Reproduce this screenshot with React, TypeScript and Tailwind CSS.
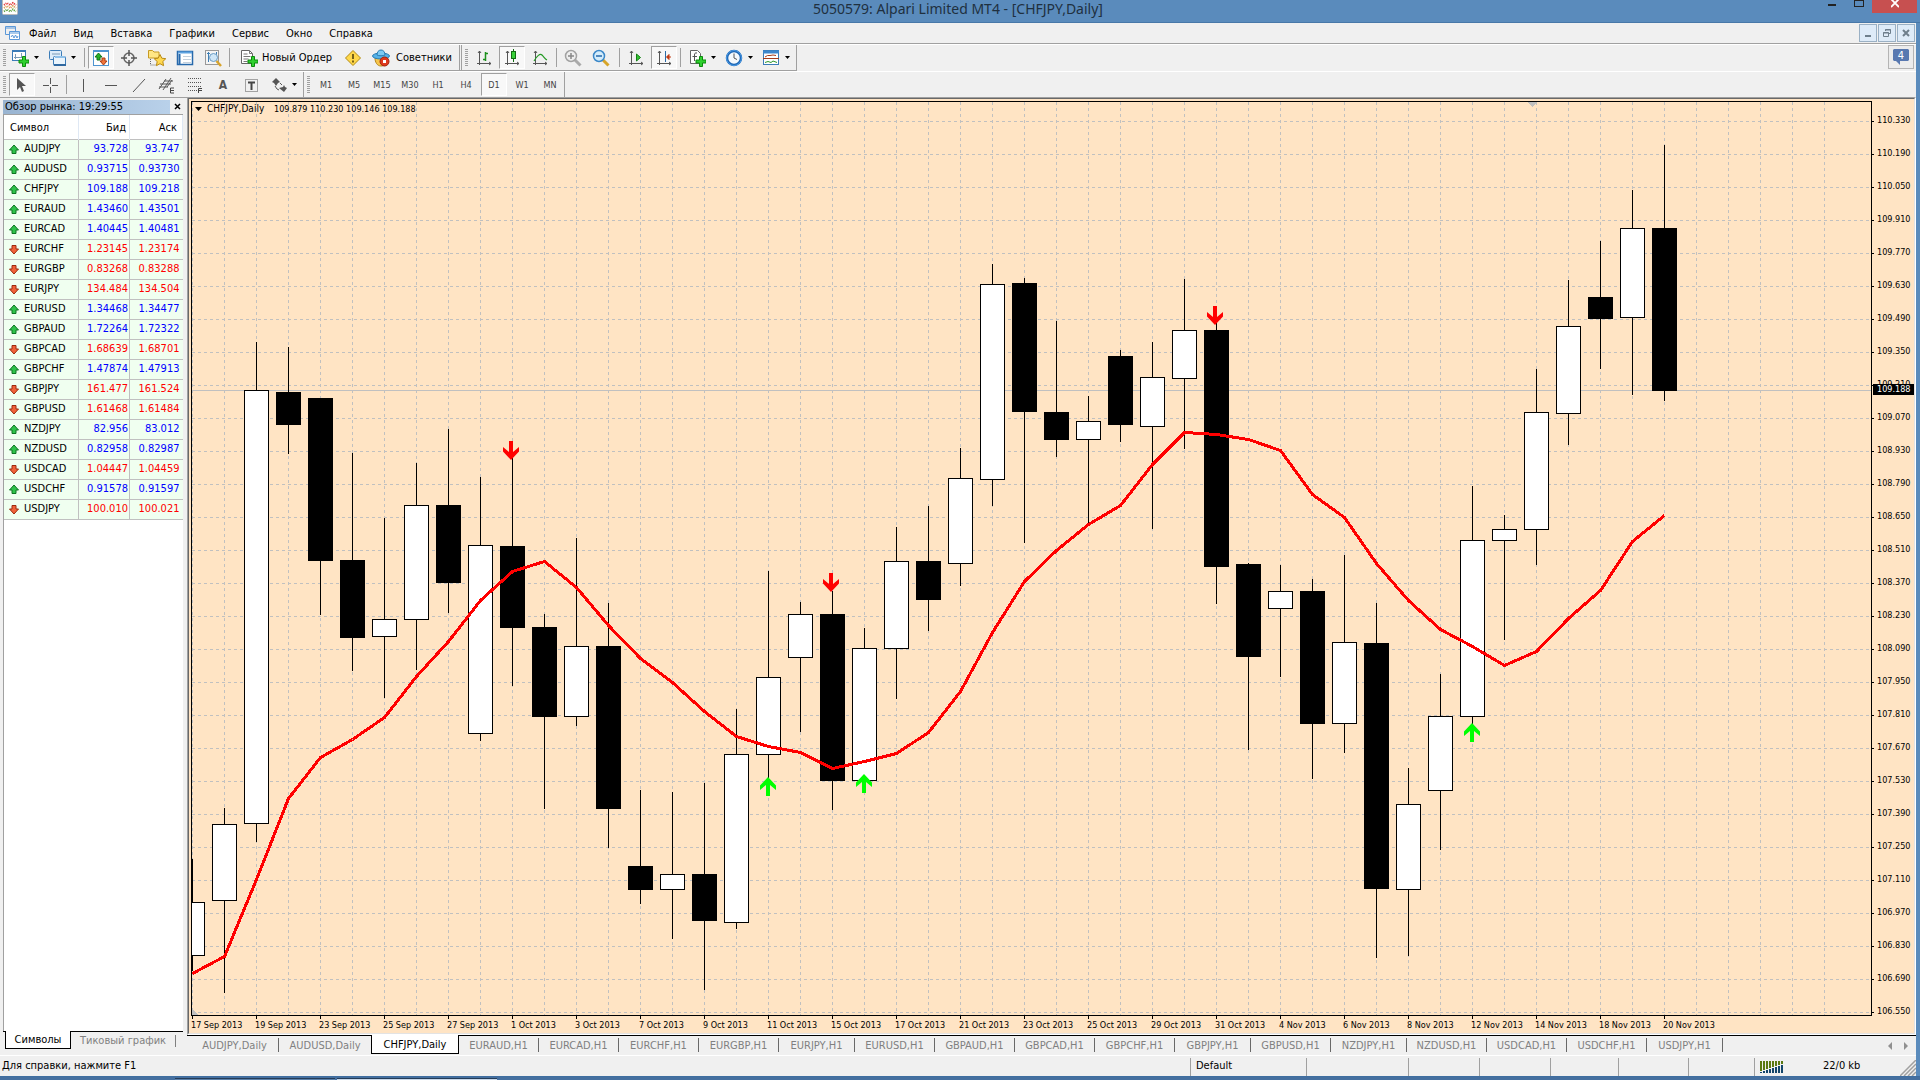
import React from "react";
import clsx from "clsx";

const TOP = 101;
const STEP = 32;

const menu = ["Файл", "Вид", "Вставка", "Графики", "Сервис", "Окно", "Справка"];

const quotes: [string, string, string, boolean][] = [
  ["AUDJPY", "93.728", "93.747", true],
  ["AUDUSD", "0.93715", "0.93730", true],
  ["CHFJPY", "109.188", "109.218", true],
  ["EURAUD", "1.43460", "1.43501", true],
  ["EURCAD", "1.40445", "1.40481", true],
  ["EURCHF", "1.23145", "1.23174", false],
  ["EURGBP", "0.83268", "0.83288", false],
  ["EURJPY", "134.484", "134.504", false],
  ["EURUSD", "1.34468", "1.34477", true],
  ["GBPAUD", "1.72264", "1.72322", true],
  ["GBPCAD", "1.68639", "1.68701", false],
  ["GBPCHF", "1.47874", "1.47913", true],
  ["GBPJPY", "161.477", "161.524", false],
  ["GBPUSD", "1.61468", "1.61484", false],
  ["NZDJPY", "82.956", "83.012", true],
  ["NZDUSD", "0.82958", "0.82987", true],
  ["USDCAD", "1.04447", "1.04459", false],
  ["USDCHF", "0.91578", "0.91597", true],
  ["USDJPY", "100.010", "100.021", false],
];

const periods = ["M1", "M5", "M15", "M30", "H1", "H4", "D1", "W1", "MN"];

const charts = [
  "AUDJPY,Daily", "AUDUSD,Daily", "CHFJPY,Daily", "EURAUD,H1", "EURCAD,H1", "EURCHF,H1", "EURGBP,H1",
  "EURJPY,H1", "EURUSD,H1", "GBPAUD,H1", "GBPCAD,H1", "GBPCHF,H1", "GBPJPY,H1", "GBPUSD,H1",
  "NZDJPY,H1", "NZDUSD,H1", "USDCAD,H1", "USDCHF,H1", "USDJPY,H1",
];

const dates = [
  "17 Sep 2013", "19 Sep 2013", "23 Sep 2013", "25 Sep 2013", "27 Sep 2013", "1 Oct 2013", "3 Oct 2013",
  "7 Oct 2013", "9 Oct 2013", "11 Oct 2013", "15 Oct 2013", "17 Oct 2013", "21 Oct 2013", "23 Oct 2013",
  "25 Oct 2013", "29 Oct 2013", "31 Oct 2013", "4 Nov 2013", "6 Nov 2013", "8 Nov 2013", "12 Nov 2013",
  "14 Nov 2013", "18 Nov 2013", "20 Nov 2013",
];

// high, body top, body bottom, low, 1 = bull
const candles: [number, number, number, number, number][] = [
  [859, 902, 955, 971, 1], [808, 824, 900, 993, 1], [342, 390, 823, 842, 1], [347, 392, 424, 454, 0],
  [398, 398, 560, 615, 0], [453, 560, 637, 671, 0], [518, 619, 636, 698, 1], [463, 505, 619, 670, 1],
  [429, 505, 582, 613, 0], [477, 545, 733, 741, 1], [458, 546, 627, 686, 0], [614, 627, 716, 809, 0],
  [538, 646, 716, 726, 1], [603, 646, 808, 848, 0], [790, 866, 889, 904, 0], [792, 874, 889, 939, 1],
  [783, 874, 920, 990, 0], [709, 754, 922, 929, 1], [571, 677, 754, 778, 1], [602, 614, 657, 732, 1],
  [591, 614, 780, 810, 0], [628, 648, 780, 781, 1], [527, 561, 648, 699, 1], [506, 561, 599, 631, 0],
  [448, 478, 563, 586, 1], [264, 284, 479, 506, 1], [278, 283, 411, 543, 0], [321, 412, 439, 457, 0],
  [396, 421, 439, 523, 1], [350, 356, 424, 442, 0], [342, 377, 426, 529, 1], [279, 330, 378, 449, 1],
  [323, 330, 566, 604, 0], [563, 564, 656, 750, 0], [565, 591, 608, 677, 1], [579, 591, 723, 779, 0],
  [555, 642, 723, 753, 1], [603, 643, 888, 958, 0], [768, 804, 889, 956, 1], [674, 716, 790, 850, 1],
  [486, 540, 716, 725, 1], [515, 529, 540, 640, 1], [369, 412, 529, 565, 1], [280, 326, 413, 445, 1],
  [241, 297, 318, 369, 0], [190, 228, 317, 395, 1], [145, 228, 390, 401, 0],
];

const average = [
  973, 956, 879, 798, 757, 739, 717, 676, 641, 600, 571, 561, 587, 625, 658, 682, 711, 736, 746, 752, 768, 761,
  753, 732, 691, 632, 581, 550, 524, 505, 464, 432, 434, 439, 450, 494, 517, 563, 600, 629, 646, 665, 651, 618,
  590, 541, 515,
];

const signals: [number, number, boolean][] = [
  [511, 441, false], [768, 777, true], [831, 573, false], [864, 774, true], [1215, 306, false], [1472, 723, true],
];

const prices = Array.from({ length: 28 }, (_, i) => (110.33 - i * 0.14).toFixed(3));

function Icon({ children, w = 18 }: { children: React.ReactNode; w?: number }) {
  return (
    <svg width={w} height="18" viewBox={`0 0 ${w} 18`} fill="none" className="shrink-0" aria-hidden="true">
      {children}
    </svg>
  );
}

const Plus = () => (
  <path d="M11.5 7.500h3v3.500h3.500v3h-3.500v3.500h-3v-3.500h-3.500v-3h3.500z" fill="#2fd02f" stroke="#0b8a0b" />
);

const Axes = () => (
  <path d="M4.500 2v14M2 14.500h14M3 4l1.500-2L6 4M14 13l2 1.500-2 1.500" stroke="#555" />
);

const NewChartIcon = () => (
  <Icon>
    <rect x="1.500" y="1.500" width="13" height="10" fill="#fff" stroke="#3b7cb8" />
    <path d="M1 2h14" stroke="#3b7cb8" strokeWidth="2" />
    <path d="M4.500 5v5M3 8.500h9M10.500 4v4" stroke="#7a9bb8" />
    <Plus />
  </Icon>
);

const ProfilesIcon = () => (
  <Icon>
    <rect x="1.500" y="1.500" width="12" height="9" rx="1" fill="#dcecf9" stroke="#3b7cb8" />
    <path d="M4 5h8" stroke="#7a9bb8" />
    <rect x="5.500" y="7.500" width="12" height="9" rx="1" fill="#eaf4fc" stroke="#3b7cb8" />
    <path d="M7 8h10" stroke="#8fc0e8" strokeWidth="2" />
    <path d="M6 16h12" stroke="#2f68a0" strokeWidth="2" />
  </Icon>
);

const WatchIcon = () => (
  <Icon>
    <rect x="1.500" y="1.500" width="15" height="15" fill="#fff" stroke="#4d94d0" />
    <path d="M1 2h16" stroke="#4d94d0" strokeWidth="2" />
    <path d="M3 8l3.500-4L10 8H8v3H5V8z" fill="#27b227" stroke="#11721a" />
    <path d="M8 12l3.500 4 3.500-4h-2V9h-3v3z" fill="#f0743a" stroke="#a83a12" />
  </Icon>
);

const CrosshairIcon = () => (
  <Icon>
    <circle cx="9" cy="9" r="5" stroke="#666" strokeWidth="1.500" />
    <path d="M9 1v6M9 11v6M1 9h6M11 9h6" stroke="#555" strokeWidth="1.500" />
  </Icon>
);

const NavigatorIcon = () => (
  <Icon>
    <path d="M.5 1.500h4l1.500 1.500h5v6H.5z" fill="#ffe685" stroke="#c79a22" />
    <path d="M2.500 10v6h5" stroke="#666" strokeDasharray="1 1" />
    <path d="M12 5.500l1.800 3.700 4 .5-3 2.800.8 4.200-3.600-2-3.600 2 .8-4.200-3-2.800 4-.5z" fill="#ffd84f" stroke="#b98a14" />
  </Icon>
);

const TerminalIcon = () => (
  <Icon>
    <rect x="1.500" y="2.500" width="15" height="13" fill="#fff" stroke="#2668ab" strokeWidth="1.500" />
    <path d="M2 3.500h14" stroke="#5ea3e0" strokeWidth="2" />
    <path d="M3.500 5v10" stroke="#2668ab" strokeWidth="2" />
    <path d="M7 7.500h8M7 10.500h8M7 13.500h8" stroke="#c4d0dc" />
  </Icon>
);

const TesterIcon = () => (
  <Icon>
    <rect x="1.500" y="1.500" width="13" height="14" fill="#f4f4f4" stroke="#999" />
    <path d="M4.500 3v10M3 4.500h3M12.500 3v4" stroke="#3f7fb5" />
    <circle cx="9.500" cy="8.500" r="4" fill="#cfe6f7" stroke="#6a9cc4" />
    <path d="M12.500 12l4.500 5" stroke="#d8a32a" strokeWidth="2.500" />
  </Icon>
);

const NewOrderIcon = () => (
  <Icon>
    <path d="M1.500 1.500h8l3 3v10h-11z" fill="#fff" stroke="#666" />
    <path d="M9.500 1.500v3h3M3.500 5h4M3.500 7.500h7M3.500 10h5M3.500 12.500h4" stroke="#777" />
    <Plus />
  </Icon>
);

const WarningIcon = () => (
  <Icon>
    <path d="M9 1.500L16.500 9 9 16.500 1.500 9z" fill="#ffd84a" stroke="#b38a10" strokeLinejoin="round" />
    <path d="M9 5v5M9 11.500v2" stroke="#4a3a08" strokeWidth="1.500" />
  </Icon>
);

const AdvisorIcon = () => (
  <Icon>
    <path d="M3 9c0 4 2 8 6 8s6-3 6-8z" fill="#f6c64c" stroke="#b5861b" />
    <ellipse cx="9" cy="7" rx="8.500" ry="3" fill="#55b2e8" stroke="#2a7db5" />
    <path d="M5 6c0-3 1.500-5 4-5s4 2 4 5c-2 1-6 1-8 0z" fill="#7ccaf3" stroke="#2a7db5" />
    <circle cx="12.500" cy="12.500" r="4.500" fill="#df3a1d" stroke="#a32109" />
    <rect x="11" y="11" width="3" height="3" fill="#fff" />
  </Icon>
);

const BarsIcon = () => (
  <Icon>
    <Axes />
    <path d="M10.500 3v9M8 10.500h2.500M10.500 4.500H13" stroke="#1b8f1b" strokeWidth="1.500" />
  </Icon>
);

const CandlesIcon = () => (
  <Icon>
    <Axes />
    <path d="M10.500 0v13" stroke="#116b11" />
    <rect x="8.500" y="2.500" width="4" height="7" fill="#38d038" stroke="#116b11" />
  </Icon>
);

const LineIcon = () => (
  <Icon>
    <Axes />
    <path d="M3 12c3-5 6-8 8-6s3 4 5 5" stroke="#249a24" strokeWidth="1.200" />
  </Icon>
);

function Lens({ plus, muted }: { plus?: boolean; muted?: boolean }) {
  return (
    <Icon>
      <path d="M11 11l5.500 5.500" stroke={muted ? "#aaa" : "#d6a428"} strokeWidth="3" />
      <circle cx="7" cy="7" r="5.500" fill={muted ? "#eee" : "#d3ecfb"} stroke={muted ? "#a2a2a2" : "#3a87c8"} strokeWidth="1.500" />
      <path d={plus ? "M4 7h6M7 4v6" : "M4 7h6"} stroke={muted ? "#888" : "#2668ab"} strokeWidth="1.500" />
    </Icon>
  );
}

const ScrollIcon = () => (
  <Icon>
    <Axes />
    <path d="M9.500 5v7l4-3.500z" fill="#33c433" stroke="#158015" />
  </Icon>
);

const ShiftIcon = () => (
  <Icon>
    <Axes />
    <path d="M10.500 2v11" stroke="#2b6ba6" />
    <path d="M12 8h4M14 5.500L11.500 8l2.500 2.500z" fill="#c03a12" stroke="#c03a12" />
  </Icon>
);

const IndicatorsIcon = () => (
  <Icon>
    <path d="M2.500 1.500h7l3 3v10h-10z" fill="#fff" stroke="#666" />
    <path d="M9 4c-2-.5-2.500.5-2.500 2v6M4.500 7.500H9" stroke="#555" />
    <Plus />
  </Icon>
);

const ClockIcon = () => (
  <Icon>
    <circle cx="9" cy="9" r="7" fill="#f4f9fd" stroke="#1d66b4" strokeWidth="2.500" />
    <circle cx="9" cy="9" r="7.500" stroke="#4b9be6" />
    <path d="M9 4.500V9l3 1.500" stroke="#555" />
  </Icon>
);

const TemplateIcon = () => (
  <Icon>
    <rect x="1.500" y="1.500" width="15" height="14" fill="#fff" stroke="#3b7cb8" />
    <path d="M1 3h16" stroke="#3d87cc" strokeWidth="3" />
    <path d="M3 8l2.500-1.500H8L11 6l3 .5M1 9.500h16" stroke="#a63c1a" />
    <path d="M3 13.500l3-1 3 1 2-1.500 4 1.500" stroke="#2a962a" />
  </Icon>
);

const Caret = () => (
  <svg width="5" height="3" viewBox="0 0 5 3" className="shrink-0" aria-hidden="true">
    <path d="M0 0h5L2.500 3z" fill="#000" />
  </svg>
);

const Grip = () => (
  <div className="my-1 ml-[3px] mr-[2px] w-[3px] shrink-0 self-stretch bg-[repeating-linear-gradient(#a0a0a0_0_1px,#f0f0f0_1px_2px)]" />
);

const Sep = () => <div className="mx-0.5 my-[3px] w-px shrink-0 self-stretch bg-[#a0a0a0]" />;

const End = () => <div className="w-px shrink-0 self-stretch bg-[#a0a0a0]" />;

type ToolProps = { label: string; active?: boolean; menu?: boolean; children: React.ReactNode };

function Tool({ label, active, menu, children }: ToolProps) {
  return (
    <button
      type="button"
      aria-label={label}
      aria-pressed={active}
      className={clsx(
        "flex h-[23px] shrink-0 items-center",
        menu ? "w-[37px] gap-[5px] pl-[3px]" : "mx-px w-[26px] justify-center",
        active && "border border-b-white border-l-[#a0a0a0] border-r-white border-t-[#a0a0a0] bg-[#f8f8f8]",
      )}
    >
      {children}
      {menu && <Caret />}
    </button>
  );
}

function TitleBar() {
  return (
    <header className="grid h-[23px] shrink-0 grid-cols-[1fr_auto_1fr] border-b border-[#4878a8] bg-[#5a8bbc]">
      <svg width="16" height="16" viewBox="0 0 16 16" className="ml-0.5" aria-hidden="true">
        <rect x="0.500" y="-2" width="15" height="16.500" rx="1" fill="#fff" stroke="#bbb" />
        <path d="M2 5l3-2 3 2 3-2 3 2" stroke="#e03030" fill="none" strokeDasharray="1 1" strokeWidth="2" />
        <path d="M2 8l3-2 3 2 3-2 3 2" stroke="#d89a50" fill="none" strokeDasharray="1 1" strokeWidth="2" />
        <path d="M2 11.500l3-2 3 2 3-2 3 2" stroke="#5aa03c" fill="none" strokeDasharray="1 1" strokeWidth="2" />
      </svg>
      <h1 className="pr-1 font-['Noto_Sans',sans-serif] text-[14px] leading-[18px] text-[#20303f]">
        5050579: Alpari Limited MT4 - [CHFJPY,Daily]
      </h1>
      <div className="mr-[3px] flex justify-end">
        <button type="button" aria-label="Свернуть" className="flex h-[13px] w-7 justify-center pt-1">
          <span className="h-0.5 w-2 bg-[#222]" />
        </button>
        <button type="button" aria-label="Развернуть" className="flex h-[13px] w-[26px] justify-center">
          <span className="h-[7px] w-2.5 border border-[#222]" />
        </button>
        <button type="button" aria-label="Закрыть" className="flex h-[13px] w-[45px] justify-center bg-[#c75050]">
          <svg width="8" height="8" viewBox="0 0 8 8" aria-hidden="true">
            <path d="M0-1l8 8M8-1L0 7" stroke="#fff" strokeWidth="1.800" />
          </svg>
        </button>
      </div>
    </header>
  );
}

function MenuBar() {
  const box = "flex h-[18px] w-[18px] items-center justify-center border border-[#9ab0c4] bg-[#deebf8]";
  return (
    <nav className="flex h-[21px] shrink-0 items-center border-b border-[#a0a0a0] pl-[5px] text-[11px]">
      <svg width="15" height="15" viewBox="0 0 15 15" fill="none" aria-hidden="true">
        <path d="M.5.5h10v8H.5zM.5 2h10" stroke="#5b98d8" />
        <path d="M4.500 5.500h10v8h-10zM4.500 7h10" fill="#fff" stroke="#5b98d8" />
        <path d="M6 11l1.500-2L9 12l1.500-3 1.500 3 1-2" stroke="#5b98d8" />
      </svg>
      {menu.map((m) => (
        <button key={m} type="button" className="pl-2 pr-[9px] pt-0.5 first-of-type:pl-[9px]">
          {m}
        </button>
      ))}
      <div className="ml-auto flex gap-px pr-px">
        <button type="button" aria-label="Свернуть окно" className={box}>
          <span className="mt-1.5 h-0.5 w-1.5 bg-[#6f7f8c]" />
        </button>
        <button type="button" aria-label="Восстановить окно" className={box}>
          <svg width="8" height="8" viewBox="0 0 8 8" fill="none" stroke="#6f7f8c" aria-hidden="true">
            <path d="M2.500 2V.5h5v4H6M2 1h6" />
            <path d="M.5 3.500h5v4h-5zM0 4h6" />
          </svg>
        </button>
        <button type="button" aria-label="Закрыть окно" className={box}>
          <svg width="8" height="8" viewBox="0 0 8 8" aria-hidden="true">
            <path d="M1 1l6 6M7 1L1 7" stroke="#6f7f8c" strokeWidth="2" />
          </svg>
        </button>
      </div>
    </nav>
  );
}

function MainToolbar() {
  return (
    <div className="flex h-[27px] shrink-0 items-start border-t border-white">
      <div className="flex h-[26px] items-center border-b border-[#a0a0a0] text-[11px]">
        <Grip />
        <Tool label="Новый график" menu><NewChartIcon /></Tool>
        <Tool label="Профили" menu><ProfilesIcon /></Tool>
        <Sep />
        <Tool label="Обзор рынка" active><WatchIcon /></Tool>
        <Tool label="Окно данных"><CrosshairIcon /></Tool>
        <Tool label="Навигатор"><NavigatorIcon /></Tool>
        <Tool label="Терминал"><TerminalIcon /></Tool>
        <Tool label="Тестер стратегий"><TesterIcon /></Tool>
        <Sep />
        <button type="button" className="flex w-[107px] items-center gap-1 whitespace-nowrap pl-2">
          <NewOrderIcon />
          <span className="pt-px">Новый Ордер</span>
        </button>
        <Tool label="Предупреждение"><WarningIcon /></Tool>
        <button type="button" className="flex w-[92px] items-center gap-1.5 whitespace-nowrap pl-[5px]">
          <AdvisorIcon />
          <span className="pt-px">Советники</span>
        </button>
        <End />
        <div className="w-px" />
        <End />
        <Grip />
        <Tool label="Бары"><BarsIcon /></Tool>
        <Tool label="Японские свечи" active><CandlesIcon /></Tool>
        <Tool label="Линия"><LineIcon /></Tool>
        <Sep />
        <Tool label="Увеличить"><Lens plus muted /></Tool>
        <Tool label="Уменьшить"><Lens /></Tool>
        <div className="w-0.5" />
        <Sep />
        <Tool label="Автопрокрутка"><ScrollIcon /></Tool>
        <Tool label="Сдвиг графика" active><ShiftIcon /></Tool>
        <Sep />
        <div className="w-0.5" />
        <Tool label="Индикаторы" menu><IndicatorsIcon /></Tool>
        <Tool label="Периоды" menu><ClockIcon /></Tool>
        <Tool label="Шаблоны" menu><TemplateIcon /></Tool>
        <End />
      </div>
      <button
        type="button"
        aria-label="Сообщения: 4"
        className="ml-auto mr-0.5 flex h-6 w-[26px] items-center justify-center border border-[#b4b4b4] bg-[#ececec]"
      >
        <svg width="16" height="16" viewBox="0 0 16 16" aria-hidden="true">
          <path d="M1 0h14l1 1v10l-1 1H7l0 4-4-4H1l-1-1V1z" fill="#5878b0" />
          <text x="8" y="10" textAnchor="middle" fontSize="11" fill="#fff">4</text>
        </svg>
      </button>
    </div>
  );
}

function LineToolbar() {
  return (
    <div className="flex h-[26px] shrink-0 items-center border-t border-white">
      <Grip />
      <Tool label="Курсор" active>
        <Icon><path d="M4 2v12l3-3 2 5 2-1-2-5h4z" fill="#555" /></Icon>
      </Tool>
      <Tool label="Перекрестие">
        <Icon><path d="M9.500 2v6M9.500 11v6M2 9.500h6M11 9.500h6" stroke="#555" /></Icon>
      </Tool>
      <Sep />
      <Tool label="Вертикальная линия">
        <Icon><path d="M9.500 3v13" stroke="#555" /></Icon>
      </Tool>
      <Tool label="Горизонтальная линия">
        <Icon><path d="M3 9.500h12" stroke="#555" /></Icon>
      </Tool>
      <Tool label="Трендовая линия">
        <Icon><path d="M3 16L15 3" stroke="#555" /></Icon>
      </Tool>
      <Tool label="Канал">
        <Icon>
          <path d="M1 13L8 3M5 14l8-12M9 11l5-7M2 8h11M1 11h9M6 5h9" stroke="#555" />
          <path d="M16 12h-3.500v5H16M12.500 14.500H16" stroke="#444" />
        </Icon>
      </Tool>
      <Tool label="Фибоначчи">
        <Icon>
          <path d="M2 2.500h14M2 6.500h14M2 10.500h14M2 14.500h9" stroke="#555" strokeDasharray="1 1" />
          <path d="M16 12.500h-3.500V17M12.500 14.500H16" stroke="#444" />
        </Icon>
      </Tool>
      <Tool label="Текст">
        <span className="pt-px text-[12px] font-bold text-[#555]">A</span>
      </Tool>
      <Tool label="Текстовая метка">
        <Icon>
          <path d="M3.500 3.500h12v12h-12z" stroke="#555" strokeDasharray="1 1" />
          <path d="M6 6.500h7M9.500 6v8" stroke="#444" strokeWidth="2" />
        </Icon>
      </Tool>
      <div className="w-px" />
      <Tool label="Стрелки" menu>
        <Icon>
          <path d="M3 6l4-4 4 4-2 1-2 3-2-3zM10 12l5 4 3-4-2-1-1-2-1 2z" fill="#555" />
          <path d="M6 10l2 3 2 1M11 7l2 2" stroke="#555" />
        </Icon>
      </Tool>
      <End />
      <Grip />
      {periods.map((p) => (
        <Tool key={p} label={p} active={p === "D1"}>
          <span className="pt-0.5 text-[9px] text-[#444]">{p}</span>
        </Tool>
      ))}
      <End />
    </div>
  );
}

function Trend({ up }: { up: boolean }) {
  return (
    <svg width="12" height="11" viewBox="0 0 12 11" aria-hidden="true" className={clsx(!up && "rotate-180")}>
      <path
        d="M6 1l4.500 5H8v3.500H4V6H1.500z"
        fill={up ? "#2fc24a" : "#f0623a"}
        stroke={up ? "#0e7422" : "#9c2a0c"}
        strokeLinejoin="round"
      />
    </svg>
  );
}

function MarketWatch() {
  return (
    <aside className="flex w-[187px] shrink-0 flex-col border-t border-[#a0a0a0] pl-[3px] pr-1">
      <div className="flex h-4 items-center justify-between pt-px text-[11px]">
        <h2 className="h-[14px] w-[167px] bg-linear-to-r from-[#99b4d1] to-[#b9d1ea] pl-0.5 leading-[14px]">
          Обзор рынка: 19:29:55
        </h2>
        <button type="button" aria-label="Закрыть" className="flex w-3 justify-center">
          <svg width="7" height="7" viewBox="0 0 7 7" aria-hidden="true">
            <path d="M1 1l5 5M6 1L1 6" stroke="#000" strokeWidth="1.500" />
          </svg>
        </button>
      </div>
      <div className="flex-1 border-l border-t border-[#a0a0a0] bg-white">
        <table className="w-full table-fixed border-collapse text-[11px]">
          <colgroup>
            <col />
            <col className="w-[51px]" />
            <col className="w-[53px]" />
          </colgroup>
          <thead>
            <tr className="h-6">
              <th className="p-0 pl-1.5 pt-0.5 text-left font-normal">Символ</th>
              <th className="border-l border-[#dfe8f4] p-0 pr-[3px] pt-0.5 text-right font-normal">Бид</th>
              <th className="border-x border-[#dfe8f4] p-0 pr-[5px] pt-0.5 text-right font-normal">Аск</th>
            </tr>
          </thead>
          <tbody>
            {quotes.map(([name, bid, ask, up]) => (
              <tr key={name} className={clsx("h-5 border-y border-[#c0c0c0] bg-[#f0fff0]", up ? "text-[#0000ff]" : "text-[#ff0000]")}>
                <td className="border-r border-[#c0c0c0] p-0 pl-1 text-black">
                  <span className="flex items-center gap-1">
                    <Trend up={up} />
                    {name}
                  </span>
                </td>
                <td className="border-r border-[#c0c0c0] p-0 pr-px text-right">{bid}</td>
                <td className="p-0 pr-[3px] text-right">{ask}</td>
              </tr>
            ))}
          </tbody>
        </table>
      </div>
      <div className="flex h-6 items-start text-[11px]">
        <div className="h-px w-0.5 bg-black" />
        <button type="button" className="h-[18px] w-[66px] border-x border-b border-black bg-white leading-[18px]">
          Символы
        </button>
        <div className="flex h-[18px] flex-1 items-center border-t border-black">
          <button type="button" className="w-[105px] border-r border-[#808080] leading-[12px] text-[#808080]">
            Тиковый график
          </button>
        </div>
      </div>
    </aside>
  );
}

function Plot() {
  const x = (i: number) => 1 + i * STEP;
  return (
    <svg width="100%" height="100%" className="block overflow-visible" role="img" aria-label="CHFJPY, Daily">
      <g transform={`translate(0 ${-TOP})`} shapeRendering="crispEdges">
        <g stroke="#c0c0c0" strokeDasharray="3 3">
          {prices.map((p, i) => (
            <line key={p} x1="1" x2="1680" y1={121.5 + i * 33} y2={121.5 + i * 33} />
          ))}
          {Array.from({ length: 52 }, (_, i) => (
            <line key={i} x1={x(i) + 0.5} x2={x(i) + 0.5} y1="102" y2="1015" />
          ))}
        </g>
        <path d="M1 390.500h1679" stroke="#c0c0c0" />
        <path d="M1337 102h9l-4.500 5zM1 1009l6 6H1z" fill="#c0c0c0" />
        <path d="M0 101.500h1680.500V1015.500H.5V101.500" fill="none" stroke="#000" />
        <g fill="#000">
          {prices.map((p, i) => (
            <rect key={p} x="1681" y={121 + i * 33} width="2" height="1" />
          ))}
          {dates.map((d, i) => (
            <rect key={d} x={1 + i * 64} y="1016" width="1" height="3" />
          ))}
        </g>
        {candles.map(([high, top, bottom, low, bull], i) => {
          const left = Math.max(x(i) - 12, 0);
          return (
            <g key={i}>
              <rect x={x(i)} y={high} width="1" height={low - high} fill="#000" />
              <rect
                x={left + 0.5}
                y={top + 0.5}
                width={x(i) + 12 - left}
                height={bottom - top}
                fill={bull ? "#fff" : "#000"}
                stroke="#000"
              />
            </g>
          );
        })}
        <polyline
          points={average.map((y, i) => `${x(i) + 0.5},${y + 0.5}`).join(" ")}
          fill="none"
          stroke="#ff0000"
          strokeWidth="3"
          strokeLinejoin="round"
        />
      </g>
      {signals.map(([sx, sy, up]) => (
        <path
          key={sx}
          transform={`translate(${sx - 191} ${sy - TOP})`}
          d={up ? "M-2 19h4V8l6 5V8.500L0 0l-8 8.500V13l6-5z" : "M-2 0h4v11l6-5v4.500L0 19l-8-8.500V6l6 5z"}
          fill={up ? "#00ff00" : "#ff0000"}
        />
      ))}
    </svg>
  );
}

function ChartPane() {
  return (
    <section className="flex min-w-0 flex-1 flex-col">
      <div className="flex min-h-0 flex-1 border-b border-r border-b-white border-l border-l-[#a0a0a0] border-r-white border-t border-t-[#a0a0a0]">
        <div className="grid min-w-0 flex-1 grid-cols-[1fr_42px] grid-rows-[1fr_17px] border border-b-[#e3e3e3] border-l-[#696969] border-r-[#e3e3e3] border-t-[#696969] bg-[#ffe4c4] pl-0.5 pt-0.5 text-[9px]">
          <div className="relative min-h-0 min-w-0">
            <Plot />
            <div className="absolute left-1 top-0.5 flex items-center gap-[5px] whitespace-nowrap leading-3">
              <svg width="7" height="4" viewBox="0 0 7 4" aria-hidden="true">
                <path d="M0 0h7L3.500 4z" fill="#000" />
              </svg>
              <span className="w-[62px] text-[10px]">CHFJPY,Daily</span>
              <span>109.879 110.230 109.146 109.188</span>
            </div>
          </div>
          <div className="relative min-h-0 pl-[5px] pt-[3px]">
            {prices.map((p) => (
              <div key={p} className="h-[33px] leading-[33px]">
                {p}
              </div>
            ))}
            <div className="absolute left-px right-0 top-[283px] h-[11px] bg-black pl-1 leading-[11px] text-white">109.188</div>
          </div>
          <div className="col-span-2 flex min-w-0 leading-[18px]">
            {dates.map((d) => (
              <div key={d} className="w-16 shrink-0 whitespace-nowrap">
                {d}
              </div>
            ))}
          </div>
        </div>
      </div>
      <div className="flex h-5 shrink-0 text-[11px]">
        {charts.map((c, i) =>
          i === 2 ? (
            <button key={c} type="button" className="h-[19px] w-[88px] shrink-0 border-x border-b border-black bg-white leading-[17px]">
              {c}
            </button>
          ) : (
            <div key={c} className="flex shrink-0 items-start border-t border-black pt-0.5">
              <button
                type="button"
                className={clsx(
                  "h-[14px] leading-[13px] text-[#808080]",
                  i < 2 ? "w-[92px]" : c.includes("JPY") ? "w-[76px]" : "w-20",
                  i === 0 && "pl-1",
                  i !== 1 && "border-r border-[#696969]",
                )}
              >
                {c}
              </button>
            </div>
          ),
        )}
        <div className="flex flex-1 items-center justify-end gap-3 border-t border-black pr-2">
          <button type="button" aria-label="Назад">
            <svg width="4" height="8" viewBox="0 0 4 8" aria-hidden="true"><path d="M4 0v8L0 4z" fill="#909090" /></svg>
          </button>
          <button type="button" aria-label="Вперёд">
            <svg width="4" height="8" viewBox="0 0 4 8" aria-hidden="true"><path d="M0 0v8l4-4z" fill="#909090" /></svg>
          </button>
        </div>
      </div>
    </section>
  );
}

function StatusBar() {
  const cell = "flex h-[18px] shrink-0 items-center border-l border-[#a0a0a0]";
  return (
    <footer className="flex h-[21px] shrink-0 items-center border-t border-white pl-0.5 pt-px text-[11px]">
      <span className="flex-1">Для справки, нажмите F1</span>
      <div className={clsx(cell, "w-[116px] pl-[5px]")}>Default</div>
      <div className={clsx(cell, "w-[102px]")} />
      <div className={clsx(cell, "w-[71px]")} />
      <div className={clsx(cell, "w-[71px]")} />
      <div className={clsx(cell, "w-[68px]")} />
      <div className={clsx(cell, "w-[70px]")} />
      <div className={clsx(cell, "w-[66px]")} />
      <div className={clsx(cell, "w-[162px] pl-[5px]")}>
        <svg width="24" height="12" viewBox="0 0 24 12" shapeRendering="crispEdges" aria-hidden="true">
          {[10, 9, 8, 7, 6, 5, 4, 3].map((h, i) => (
            <g key={h}>
              <rect x={i * 3} y="0" width="2" height={h} fill="#5b7a12" />
              <rect x={i * 3} y={h + 1} width="2" height={11 - h} fill="#12456b" />
            </g>
          ))}
        </svg>
        <span className="ml-auto w-[77px]">22/0 kb</span>
        <svg width="16" height="16" viewBox="0 0 16 16" stroke="#a0a0a0" strokeWidth="1.500" aria-hidden="true" className="self-end">
          <path d="M0 16L16 0M4 16L16 4M8 16l8-8M12 16l4-4" />
        </svg>
      </div>
    </footer>
  );
}

export default function App() {
  return (
    <div className="flex h-screen flex-col overflow-hidden bg-[#5a8bbc] font-['DejaVu_Sans_Condensed','DejaVu_Sans',sans-serif] text-black">
      <TitleBar />
      <div className="mr-1 flex min-h-0 flex-1 flex-col bg-[#f0f0f0]">
        <MenuBar />
        <MainToolbar />
        <LineToolbar />
        <main className="flex min-h-0 flex-1">
          <MarketWatch />
          <ChartPane />
        </main>
        <StatusBar />
      </div>
      <div className="flex h-1 shrink-0 gap-0.5 border-t border-[#3f6ea0] bg-[#456f9f] pl-[175px] pt-px">
        <div className="w-40 border-t border-[#243c58] bg-[#5a7fa8]" />
        <div className="w-40 border-t border-[#243c58] bg-[#c8d8ea]" />
      </div>
    </div>
  );
}
